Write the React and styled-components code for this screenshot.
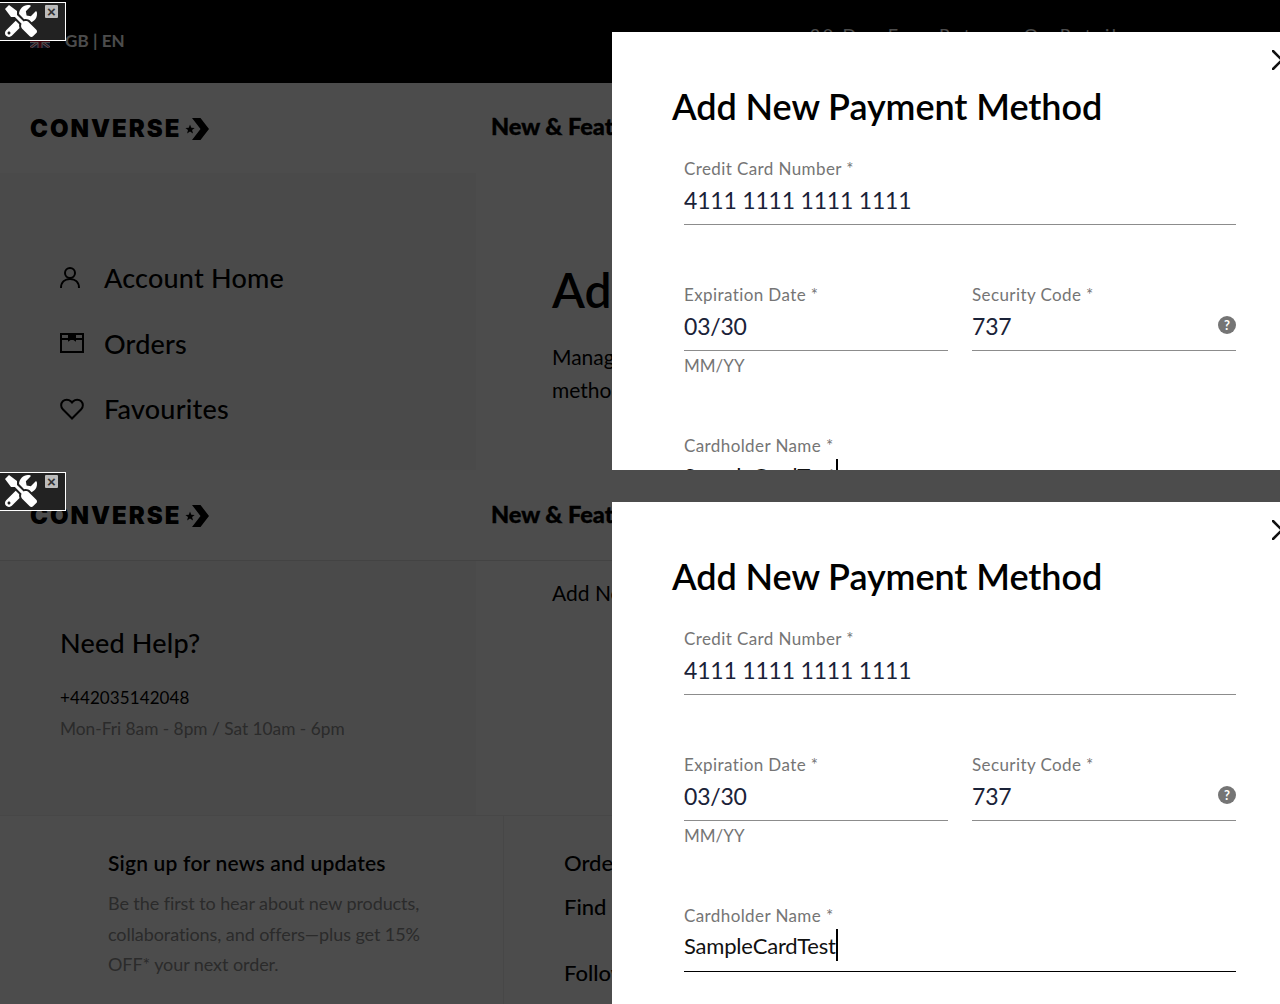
import React from 'react';
import styled, { createGlobalStyle } from 'styled-components';
import { FaTools } from 'react-icons/fa';

const GlobalStyle = createGlobalStyle`
  html, body { margin: 0; padding: 0; background: #4d4d4d; }
  body { font-family: "Lato", "Liberation Sans", sans-serif; color: #000; }
  * { box-sizing: border-box; }
`;

// the reference is two stitched viewports of the same page
const Shot = styled.section`
  position: relative;
  width: 1280px;
  height: ${(p) => p.$height}px;
  overflow: hidden;
  background: #fff;
`;

const TopBar = styled.div`
  height: 83px;
  background: #000;
  display: flex;
  align-items: center;
  padding-left: 30px;
`;

const Locale = styled.div`
  display: flex;
  align-items: center;
  gap: 15px;
  color: #fff;
  font-size: 17px;
  font-weight: 700;
  letter-spacing: 0.1px;
  padding-bottom: 2px;
`;

const Promo = styled.div`
  margin-left: 685px;
  margin-top: -14px;
  color: #fff;
  font-size: 18px;
  letter-spacing: 2.4px;
  white-space: nowrap;
`;

const Header = styled.header`
  height: ${(p) => p.$height}px;
  display: flex;
  align-items: center;
  padding-left: 30px;
  border-bottom: 1px solid ${(p) => p.$line};
`;

const Logo = styled.div`
  width: 461px;
  display: flex;
  align-items: center;
  gap: 2px;
  margin-top: 2px;
`;

const LogoWord = styled.span`
  font-family: "Inter", sans-serif;
  font-weight: 900;
  font-size: 24px;
  letter-spacing: 2px;
  line-height: 1;
`;

const NavItem = styled.span`
  font-size: 23.500px;
  font-weight: 900;
  -webkit-text-stroke: 0.4px #000;
  white-space: nowrap;
  margin-bottom: 3px;
`;

const Columns = styled.div`
  display: flex;
  height: ${(p) => p.$height}px;
`;

const Sidebar = styled.aside`
  width: 476px;
  background: #f9f9f9;
  padding: ${(p) => p.$pad}px 0 0 60px;
`;

const Main = styled.main`
  flex: 1;
  padding: ${(p) => p.$pad}px 0 0 76px;
`;

const SideLink = styled.a`
  display: flex;
  align-items: center;
  height: 65.500px;
  gap: 20px;
  font-size: 27px;
  font-weight: 500;
  letter-spacing: 0.2px;
  svg { width: 24px; flex: none; }
`;

const PageTitle = styled.h1`
  margin: 0 0 21px;
  font-size: 48px;
  line-height: 58px;
  font-weight: 600;
  white-space: nowrap;
`;

const Intro = styled.p`
  margin: 0;
  font-size: 21px;
  line-height: 33px;
`;

const Crumb = styled.div`
  font-size: 21px;
  line-height: 26px;
  white-space: nowrap;
`;

const HelpTitle = styled.h2`
  margin: 0 0 22px;
  font-size: 27px;
  line-height: 34px;
  font-weight: 500;
  letter-spacing: 0.2px;
`;

const Phone = styled.div`
  font-size: 17px;
  line-height: 31px;
  letter-spacing: 0.1px;
`;

const Hours = styled.div`
  font-size: 17.300px;
  line-height: 31px;
  color: #8f8f8f;
`;

const FooterCopy = styled.div`
  font-size: 18px;
  line-height: 30.500px;
  letter-spacing: -0.080px;
  color: #8f8f8f;
`;

const Footer = styled.footer`
  display: flex;
  border-top: 1px solid #eee;
  height: 189px;
`;

const FooterLeft = styled.div`
  width: 504px;
  padding: 32px 0 0 108px;
  border-right: 1px solid #eee;
`;

const FooterRight = styled.div`
  padding: 32px 0 0 60px;
`;

const FooterTitle = styled.h3`
  margin: 0 0 10px;
  font-size: 21px;
  line-height: 30px;
  font-weight: 600;
  letter-spacing: 0.2px;
  white-space: nowrap;
`;

const FooterLink = styled.div`
  font-size: 22px;
  line-height: 30px;
  font-weight: 500;
  white-space: nowrap;
  margin-bottom: ${(p) => p.$gap}px;
`;

const Backdrop = styled.div`
  position: absolute;
  inset: 0;
  background: rgba(0, 0, 0, 0.7);
`;

const Modal = styled.div`
  position: absolute;
  left: 612px;
  top: 32px;
  width: 696px;
  background: #fff;
  padding: 51px 60px 60px;
`;

const CloseButton = styled.button`
  position: absolute;
  top: 18px;
  right: 16px;
  width: 20px;
  height: 20px;
  padding: 0;
  border: 0;
  background: none;
  color: #111;
  svg { display: block; }
`;

const ModalTitle = styled.h2`
  margin: 0 0 29px;
  font-size: 36px;
  line-height: 46px;
  font-weight: 600;
  letter-spacing: -0.080px;
  white-space: nowrap;
`;

const FormRow = styled.div`
  display: flex;
  gap: 24px;
  padding: 0 12px;
  margin-bottom: ${(p) => p.$gap}px;
`;

const Field = styled.div`
  flex: 1;
  position: relative;
`;

const Label = styled.label`
  display: block;
  font-size: 17px;
  line-height: 21px;
  letter-spacing: 0.4px;
  color: #757575;
`;

const Value = styled.div`
  display: flex;
  align-items: center;
  height: 46px;
  padding-bottom: ${(p) => (p.$focus ? '7px' : '4px')};
  font-size: ${(p) => (p.$focus ? '22px' : '23px')};
  letter-spacing: -0.2px;
  color: ${(p) => (p.$focus ? '#111' : '#1a2238')};
  border-bottom: 1px solid ${(p) => (p.$focus ? '#000' : '#8c8c8c')};
`;

const Caret = styled.span`
  width: 2px;
  height: 32px;
  background: #000;
`;

const Hint = styled.div`
  margin-top: 4px;
  font-size: 17px;
  line-height: 21px;
  color: #757575;
`;

const HelpDot = styled.span`
  position: absolute;
  right: 0;
  top: 32px;
  width: 18px;
  height: 18px;
  border-radius: 50%;
  background: #757575;
  color: #fff;
  font-size: 13px;
  font-weight: 700;
  line-height: 18px;
  text-align: center;
`;

const DevTool = styled.div`
  position: absolute;
  left: -2px;
  top: 2px;
  width: 68px;
  height: 39px;
  background: #222;
  border: 1px solid #fff;
  color: #fff;
  svg { position: absolute; left: 6px; top: 2px; width: 32px; height: 32px; }
`;

const DevClose = styled.span`
  position: absolute;
  left: 46px;
  top: 2px;
  width: 13px;
  height: 13px;
  border-radius: 1px;
  background: #bdbdbd;
  color: #333;
  font-size: 15px;
  font-weight: 700;
  line-height: 13px;
  text-align: center;
  font-family: "Liberation Sans", sans-serif;
`;

const Flag = () => (
  <svg width="20" height="15" viewBox="0 0 20 15">
    <rect width="20" height="15" fill="#26337a" />
    <path d="M0 0l20 15M20 0L0 15" stroke="#fff" strokeWidth="3" />
    <path d="M0 0l20 15M20 0L0 15" stroke="#c8102e" strokeWidth="1" />
    <path d="M10 0v15M0 7.500h20" stroke="#fff" strokeWidth="5" />
    <path d="M10 0v15M0 7.500h20" stroke="#c8102e" strokeWidth="3" />
  </svg>
);

const LogoMark = () => (
  <svg width="26" height="22" viewBox="0 0 26 22">
    <path d="M6 6.500l1.300 3.200 3.400.2-2.600 2.200.9 3.300-3-1.800-2.900 1.800.9-3.300L1.400 9.900l3.400-.2z" fill="#000" />
    <path d="M8 0h8.500L25 11l-8.500 11H8l8.500-11z" fill="#000" />
  </svg>
);

const UserIcon = () => (
  <svg viewBox="0 0 24 24" height="24" fill="none" stroke="#000" strokeWidth="2">
    <circle cx="10" cy="7" r="5" />
    <path d="M1 22c0-6 4-9 9-9s9 3 9 9" />
  </svg>
);

const BoxIcon = () => (
  <svg viewBox="0 0 24 20" height="20" fill="none" stroke="#000" strokeWidth="2">
    <rect x="1" y="1" width="22" height="18" />
    <path d="M1 6h22" />
    <path d="M9 1h6v6l-3-2-3 2z" fill="#000" />
  </svg>
);

const HeartIcon = () => (
  <svg viewBox="0 0 24 22" height="22" fill="none" stroke="#000" strokeWidth="2">
    <path d="M12 20.500L2.800 11.300a5.700 5.700 0 0 1 0-8 5.700 5.700 0 0 1 8 0L12 4.500l1.200-1.200a5.700 5.700 0 0 1 8 0 5.700 5.700 0 0 1 0 8z" />
  </svg>
);

const PaymentModal = () => (
  <Modal>
    <CloseButton aria-label="Close">
      <svg width="20" height="20" viewBox="0 0 20 20" stroke="currentColor" strokeWidth="2.500" strokeLinecap="round">
        <path d="M1 1l18 18M19 1L1 19" />
      </svg>
    </CloseButton>
    <ModalTitle>Add New Payment Method</ModalTitle>
    <FormRow $gap={59}>
      <Field>
        <Label>Credit Card Number *</Label>
        <Value>4111 1111 1111 1111</Value>
      </Field>
    </FormRow>
    <FormRow $gap={59}>
      <Field>
        <Label>Expiration Date *</Label>
        <Value>03/30</Value>
        <Hint>MM/YY</Hint>
      </Field>
      <Field>
        <Label>Security Code *</Label>
        <Value>737</Value>
        <HelpDot>?</HelpDot>
      </Field>
    </FormRow>
    <FormRow $gap={0}>
      <Field>
        <Label>Cardholder Name *</Label>
        <Value $focus>SampleCardTest<Caret /></Value>
      </Field>
    </FormRow>
  </Modal>
);

const DevWidget = () => (
  <DevTool>
    <FaTools />
    <DevClose>×</DevClose>
  </DevTool>
);

export default function App() {
  return (
    <>
      <GlobalStyle />
      <Shot $height={470}>
        <TopBar>
          <Locale>
            <Flag />
            <span>GB | EN</span>
          </Locale>
          <Promo>30 Day Free Returns On Retail</Promo>
        </TopBar>
        <Header $height={90} $line="transparent">
          <Logo>
            <LogoWord>CONVERSE</LogoWord>
            <LogoMark />
          </Logo>
          <NavItem>New &amp; Featured</NavItem>
        </Header>
        <Columns $height={297}>
          <Sidebar $pad={72}>
            <SideLink><UserIcon />Account Home</SideLink>
            <SideLink><BoxIcon />Orders</SideLink>
            <SideLink><HeartIcon />Favourites</SideLink>
          </Sidebar>
          <Main $pad={88}>
            <PageTitle>Add Payment Method</PageTitle>
            <Intro>Manage your saved payment<br />methods</Intro>
          </Main>
        </Columns>
        <Backdrop />
        <PaymentModal />
        <DevWidget />
      </Shot>
      <Shot $height={534}>
        <Header $height={91} $line="#dfdfdf">
          <Logo>
            <LogoWord>CONVERSE</LogoWord>
            <LogoMark />
          </Logo>
          <NavItem>New &amp; Featured</NavItem>
        </Header>
        <Columns $height={254}>
          <Sidebar $pad={65}>
            <HelpTitle>Need Help?</HelpTitle>
            <Phone>+442035142048</Phone>
            <Hours>Mon-Fri 8am - 8pm / Sat 10am - 6pm</Hours>
          </Sidebar>
          <Main $pad={19}>
            <Crumb>Add New Payment Method</Crumb>
          </Main>
        </Columns>
        <Footer>
          <FooterLeft>
            <FooterTitle>Sign up for news and updates</FooterTitle>
            <FooterCopy>Be the first to hear about new products,</FooterCopy>
            <FooterCopy>collaborations, and offers—plus get 15%</FooterCopy>
            <FooterCopy>OFF* your next order.</FooterCopy>
          </FooterLeft>
          <FooterRight>
            <FooterLink $gap={14}>Orders</FooterLink>
            <FooterLink $gap={36}>Find a Store</FooterLink>
            <FooterLink $gap={0}>Follow Us</FooterLink>
          </FooterRight>
        </Footer>
        <Backdrop />
        <PaymentModal />
        <DevWidget />
      </Shot>
    </>
  );
}
